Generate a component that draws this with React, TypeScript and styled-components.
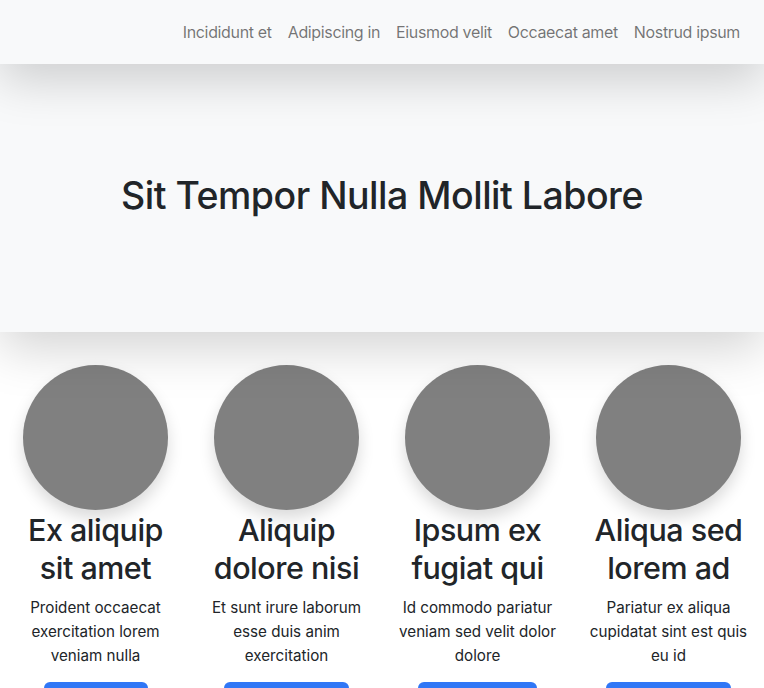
import styled, { createGlobalStyle } from "styled-components";

const GlobalStyle = createGlobalStyle`
    * {
        box-sizing: border-box;
    }
    body {
        margin: 0;
        font-family: Inter, "Noto Sans", "Liberation Sans", sans-serif;
        font-size: 16px;
        line-height: 1.5;
        color: #212529;
        background: #fff;
        overflow: hidden;
    }
`;

const navLinks = ["Incididunt et", "Adipiscing in", "Eiusmod velit", "Occaecat amet", "Nostrud ipsum"];

const features = [
    {
        title: "Ex aliquip sit amet",
        text: "Proident occaecat exercitation lorem veniam nulla",
        button: "Culpa ex",
    },
    {
        title: "Aliquip dolore nisi",
        text: "Et sunt irure laborum esse duis anim exercitation",
        button: "Deserunt in",
    },
    {
        title: "Ipsum ex fugiat qui",
        text: "Id commodo pariatur veniam sed velit dolor dolore",
        button: "Officia sed",
    },
    {
        title: "Aliqua sed lorem ad",
        text: "Pariatur ex aliqua cupidatat sint est quis eu id",
        button: "Nisi velit ad",
    },
];

const Style = {
    Navbar: styled.nav`
        position: relative;
        z-index: 2;
        height: 64px;
        display: flex;
        justify-content: flex-end;
        align-items: center;
        padding: 0 16px;
        background-color: #f8f9fa;
        box-shadow: 0 16px 48px rgba(0, 0, 0, 0.175);
    `,
    NavLink: styled.a`
        padding: 8px;
        color: rgba(0, 0, 0, 0.55);
        text-decoration: none;
        font-size: 16px;
        letter-spacing: -0.35px;
    `,
    Hero: styled.header`
        position: relative;
        z-index: 1;
        height: 268px;
        display: flex;
        justify-content: center;
        align-items: center;
        background-color: #f8f9fa;
        box-shadow: 0 16px 48px rgba(0, 0, 0, 0.175);
    `,
    HeroTitle: styled.h1`
        margin: 0;
        font-size: 37.5px;
        font-weight: 500;
        line-height: 1.2;
        letter-spacing: -0.5px;
        padding-bottom: 6px;
    `,
    Row: styled.section`
        display: grid;
        grid-template-columns: repeat(4, 1fr);
        padding-top: 33px;
    `,
    Col: styled.div`
        padding: 0 12px;
        display: flex;
        flex-direction: column;
        align-items: center;
        text-align: center;
    `,
    Circle: styled.div`
        width: 145px;
        height: 145px;
        border-radius: 50%;
        background-color: #808080;
        box-shadow: 0 8px 16px rgba(0, 0, 0, 0.15);
    `,
    Title: styled.h2`
        margin: 1px 0 8px;
        font-size: 30.5px;
        font-weight: 500;
        line-height: 38.4px;
        letter-spacing: -0.5px;
    `,
    Text: styled.p`
        margin: 0 0 14px;
        font-size: 15.2px;
        line-height: 24px;
    `,
    Button: styled.a`
        display: inline-block;
        padding: 6px 12px;
        border-radius: 6px;
        background-color: #3077f6;
        color: #fff;
        font-size: 16px;
        line-height: 24px;
        text-decoration: none;
    `,
};

export default function App() {
    return (
        <>
            <GlobalStyle />
            {/* navbar */}
            <Style.Navbar>
                {navLinks.map((link) => (
                    <Style.NavLink key={link} href="#">
                        {link}
                    </Style.NavLink>
                ))}
            </Style.Navbar>

            {/* hero */}
            <Style.Hero>
                <Style.HeroTitle>Sit Tempor Nulla Mollit Labore</Style.HeroTitle>
            </Style.Hero>

            {/* features */}
            <Style.Row>
                {features.map((f) => (
                    <Style.Col key={f.title}>
                        <Style.Circle />
                        <Style.Title>{f.title}</Style.Title>
                        <Style.Text>{f.text}</Style.Text>
                        <Style.Button href="#">{f.button} &raquo;</Style.Button>
                    </Style.Col>
                ))}
            </Style.Row>
        </>
    );
}
